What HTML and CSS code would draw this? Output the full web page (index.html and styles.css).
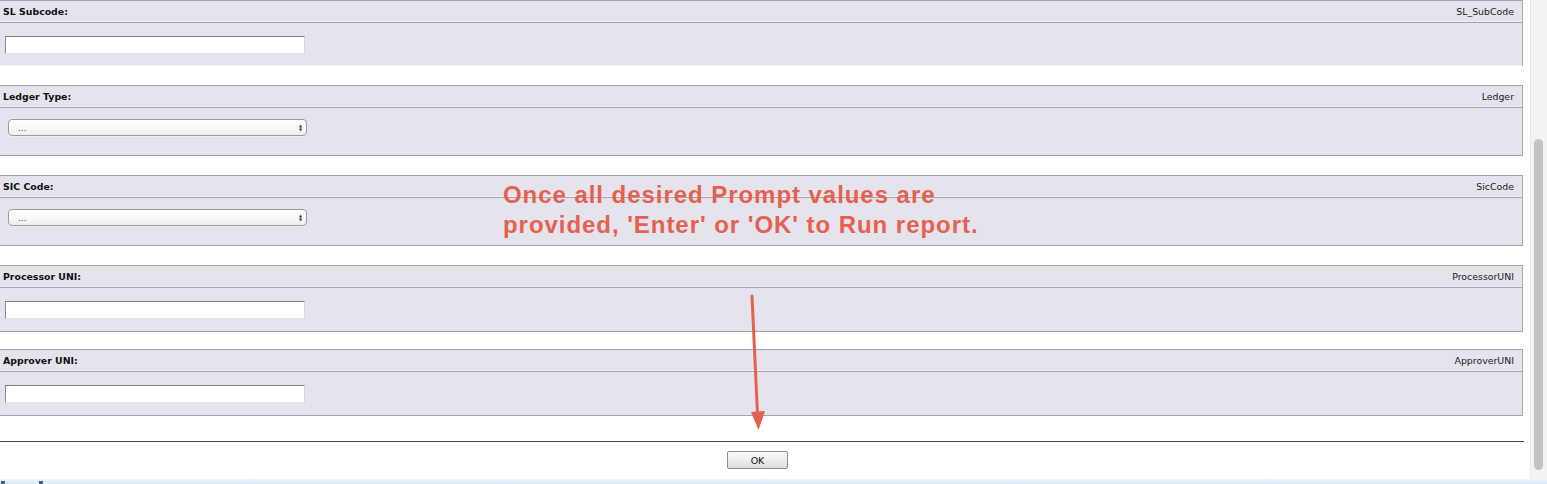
FILE: index.html
```html
<!DOCTYPE html>
<html>
<head>
<meta charset="utf-8">
<title>Prompts</title>
<link rel="stylesheet" href="styles.css">
</head>
<body>
<div class="page">
  <div class="view">
    <div class="main">
      <div class="prompts">
        <div class="prompt first">
          <div class="prompt-head"><span class="label">SL Subcode:</span><span class="field">SL_SubCode</span></div>
          <div class="prompt-body input-body"><div class="textbox"></div></div>
        </div>
        <div class="prompt">
          <div class="prompt-head"><span class="label">Ledger Type:</span><span class="field">Ledger</span></div>
          <div class="prompt-body select-body"><div class="select"><span class="select-text">...</span><span class="select-arrows"><span>&#9650;</span><span>&#9660;</span></span></div></div>
        </div>
        <div class="prompt">
          <div class="prompt-head"><span class="label">SIC Code:</span><span class="field">SicCode</span></div>
          <div class="prompt-body select-body"><div class="select"><span class="select-text">...</span><span class="select-arrows"><span>&#9650;</span><span>&#9660;</span></span></div></div>
        </div>
        <div class="prompt">
          <div class="prompt-head"><span class="label">Processor UNI:</span><span class="field">ProcessorUNI</span></div>
          <div class="prompt-body input-body"><div class="textbox"></div></div>
        </div>
        <div class="prompt tight">
          <div class="prompt-head"><span class="label">Approver UNI:</span><span class="field">ApproverUNI</span></div>
          <div class="prompt-body input-body"><div class="textbox"></div></div>
        </div>
      </div>
      <div class="footer">
        <div class="ok-button">OK</div>
      </div>
    </div>
    <div class="scrollbar"><div class="thumb"></div></div>
  </div>
  <div class="statusbar"><span class="mark"></span><span class="mark mark2"></span></div>

  <div class="note">Once all desired Prompt values are<br>provided, 'Enter' or 'OK' to Run report.</div>
  <svg class="arrow" width="40" height="150" viewBox="0 0 40 150">
    <line x1="12" y1="6" x2="17.5" y2="124" stroke="#e5604f" stroke-width="3" stroke-linecap="round"/>
    <polygon points="11,122 25,121 18.5,140" fill="#e5604f"/>
  </svg>
</div>
</body>
</html>
```

FILE: styles.css
```css
html, body {
  margin: 0;
  padding: 0;
  background: #ffffff;
}

.page {
  position: relative;
  width: 1547px;
  height: 484px;
  overflow: hidden;
  display: flex;
  flex-direction: column;
  font-family: "DejaVu Sans", Verdana, sans-serif;
}

.view {
  height: 479px;
  display: flex;
  flex-direction: row;
}

.main {
  width: 1524px;
  display: flex;
  flex-direction: column;
}

.prompts {
  display: flex;
  flex-direction: column;
  width: 1523px;
}

.prompt {
  background: #e5e4ec;
  border-right: 1px solid #a9a9ae;
}

.prompt + .prompt {
  margin-top: 19px;
}

.prompt.tight {
  margin-top: 17px;
}

.prompt-head {
  height: 21px;
  border-top: 1px solid #a3a3a8;
  border-bottom: 1px solid #a3a3a8;
  box-shadow: inset 0 -1px 0 #f1f0f6;
  display: flex;
  justify-content: space-between;
  align-items: center;
  padding: 0 8px 0 3px;
  font-size: 9.4px;
  color: #111111;
}

.label {
  font-weight: bold;
}

.field {
  font-weight: normal;
  color: #1a1a1a;
}

.prompt-body {
  border-bottom: 1px solid #a3a3a8;
}

.first .prompt-body {
  border-bottom: 1px solid #f4f4f6;
}

.input-body {
  height: 44px;
  padding: 13px 0 0 5px;
  box-sizing: border-box;
}

.first .input-body {
  height: 43px;
}

.select-body {
  height: 48px;
  padding: 11px 0 0 8px;
  box-sizing: border-box;
}

.textbox {
  width: 300px;
  height: 18px;
  box-sizing: border-box;
  background: #ffffff;
  border-top: 1px solid #7d7d7d;
  border-left: 1px solid #8a8a8a;
  border-right: 1px solid #d8d8dc;
  border-bottom: 1px solid #e4e4e8;
}

.select {
  width: 299px;
  height: 17px;
  box-sizing: border-box;
  border: 1px solid #9b9ba0;
  border-radius: 4px;
  background: linear-gradient(#ffffff, #f7f7f8 60%, #eeeeef);
  display: flex;
  align-items: center;
  justify-content: space-between;
  padding: 0 4px 0 9px;
  box-shadow: 0 1px 0 #f0f0f4;
}

.select-text {
  font-size: 9px;
  color: #444444;
  line-height: 9px;
  padding-top: 2px;
}

.select-arrows {
  display: flex;
  flex-direction: column;
  font-size: 4px;
  line-height: 4px;
  color: #333333;
}

.footer {
  margin-top: 25px;
  border-top: 1px solid #4a4a4a;
  padding: 9px 9px 0 0;
  display: flex;
  justify-content: center;
}

.ok-button {
  width: 61px;
  height: 18px;
  box-sizing: border-box;
  border: 1px solid #8c8c8c;
  border-radius: 2px;
  background: linear-gradient(#fbfbfb, #ececec 55%, #dcdcdc);
  font-size: 9.5px;
  color: #111111;
  display: flex;
  align-items: center;
  justify-content: center;
}

.scrollbar {
  margin-left: 6px;
  width: 17px;
  background: #f3f3f3;
  border-left: 1px solid #e6e6e6;
  box-sizing: border-box;
  padding: 139px 0 0 3px;
}

.thumb {
  width: 9px;
  height: 331px;
  background: #c3c3c3;
  border-radius: 5px;
}

.statusbar {
  height: 5px;
  background: linear-gradient(#eef4fb, #d9e6f5);
  display: flex;
  align-items: flex-end;
  gap: 34px;
  padding-left: 1px;
}

.mark {
  width: 4px;
  height: 3px;
  background: #4a5f80;
}

.note {
  position: absolute;
  left: 503px;
  top: 180px;
  font-family: "Liberation Sans", Arial, sans-serif;
  font-weight: bold;
  font-size: 24px;
  line-height: 30px;
  letter-spacing: 0.95px;
  color: #e5604f;
  white-space: nowrap;
}

.arrow {
  position: absolute;
  left: 740px;
  top: 290px;
}
```
